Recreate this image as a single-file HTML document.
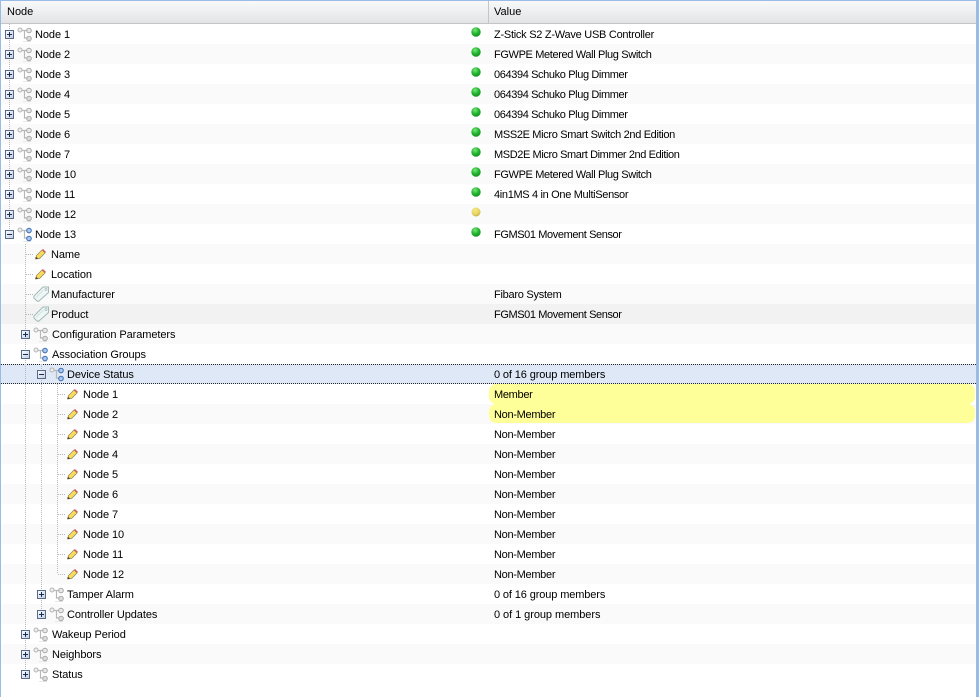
<!DOCTYPE html>
<html><head><meta charset="utf-8"><style>
html,body{margin:0;padding:0;background:#fff}
#w{position:relative;width:979px;height:697px;overflow:hidden;background:#fff;font:11px/22px "Liberation Sans",sans-serif;color:#000}
#tb{position:absolute;left:0;top:0;width:979px;height:1px;background:#99bbe8}
#lb{position:absolute;left:0;top:0;width:1px;height:697px;background:#99bbe8}
#rb{position:absolute;left:976px;top:0;width:3px;height:697px;background:#99bbe8}
#h{position:absolute;left:1px;top:1px;width:975px;height:22px;background:linear-gradient(#f9f9f9,#e3e4e6);border-bottom:1px solid #c5c5c5;line-height:22px}
#h i{position:absolute;left:487px;top:0;width:1px;height:22px;background:#c5c5c5}
#h span{position:absolute;top:0}
.r{position:absolute;left:1px;width:975px;height:20px}
.a{background:#fafafa}
.p{background:#f2f2f2}
.s{background:#dfe8f6;border-top:1px dotted #222;border-bottom:1px dotted #222;height:18px}
.t{position:absolute;white-space:nowrap;letter-spacing:-.08px}
.t[style*="left:494px"]{letter-spacing:-.3px}
.y{position:absolute;left:489px;width:486px;height:20px;background:#ffff99;border-radius:7px}
.d{position:absolute;width:1px;background-image:linear-gradient(#b8b8b8 50%,transparent 50%);background-size:1px 2px}
.hl{position:absolute;height:1px;background-image:linear-gradient(90deg,#b8b8b8 50%,transparent 50%);background-size:2px 1px}
svg{position:absolute;overflow:visible}
.dot{left:470px;width:12px;height:12px}
</style></head><body><div id="w">
<svg width="0" height="0" style="position:absolute"><defs>
<linearGradient id="bx" x1="0" y1="0" x2="1" y2="1"><stop offset="0" stop-color="#fff"/><stop offset="1" stop-color="#bccde4"/></linearGradient>
<radialGradient id="gr" cx=".4" cy=".3" r=".8"><stop offset="0" stop-color="#7be87b"/><stop offset=".5" stop-color="#22b530"/><stop offset="1" stop-color="#128a20"/></radialGradient>
<radialGradient id="ye" cx=".4" cy=".3" r=".8"><stop offset="0" stop-color="#f5e98a"/><stop offset=".6" stop-color="#e6d160"/><stop offset="1" stop-color="#b9a342"/></radialGradient>
<g id="plus"><rect x=".5" y=".5" width="8" height="8" fill="url(#bx)" stroke="#5a6a86"/><path d="M2 4.500h5M4.500 2v5" stroke="#1c2c50" fill="none"/></g>
<g id="minus"><rect x=".5" y=".5" width="8" height="8" fill="url(#bx)" stroke="#5a6a86"/><path d="M2 4.500h5" stroke="#1c2c50" fill="none"/></g>
<g id="ng"><path d="M5 3.500H7.500V11H10M7.500 3.500H10" stroke="#b8b8b8" stroke-width="1.200" fill="none"/><path d="M6 14.500h8" stroke="#e8e8e8" fill="none"/><circle cx="3" cy="3" r="2" fill="#f0f0f0" stroke="#b4b4b4"/><circle cx="12" cy="3.500" r="2.300" fill="#e8e8e8" stroke="#aaa"/><circle cx="12" cy="11.500" r="2.300" fill="#dcdcdc" stroke="#aaa"/></g>
<g id="nb"><path d="M5 3.500H7.500V11H10M7.500 3.500H10" stroke="#b8b8b8" stroke-width="1.200" fill="none"/><path d="M6 14.500h8" stroke="#e8e8e8" fill="none"/><circle cx="3" cy="3" r="2" fill="#f0f0f0" stroke="#b4b4b4"/><circle cx="12" cy="3.500" r="2.300" fill="#a9c8ee" stroke="#3d6fb8"/><circle cx="12" cy="11.500" r="2.300" fill="#a9c8ee" stroke="#3d6fb8"/></g>
<g id="pen"><path d="M.5 10L1.500 6.500 7 1 10 4 4.500 9.500z" fill="#f8dc62" stroke="#8f8048" stroke-width=".7"/><path d="M7.200 .8L8 0 11 3 10.200 3.800z" fill="#e0505c"/><path d="M.5 10L1 7.800 3 9.500z" fill="#333"/></g>
<g id="tag"><path d="M1 10L10 1H15.500V6.500L6 15Q5 15.500 4 15L1 12Q.5 11 1 10z" fill="#eef6f6" stroke="#a3b8b8"/><path d="M3 11.500L10.500 4" stroke="#d5e2e2" fill="none"/><circle cx="13" cy="3.500" r="1" fill="#fff" stroke="#a3b8b8" stroke-width=".8"/></g>
<g id="gd"><circle cx="6" cy="6" r="4.700" fill="url(#gr)"/></g>
<g id="yd"><circle cx="6" cy="6" r="4.500" fill="url(#ye)"/></g>
</defs></svg>
<div id="tb"></div><div id="lb"></div><div id="rb"></div>
<div id="h"><span style="left:6px">Node</span><i></i><span style="left:493px">Value</span></div>

<div class="r a" style="top:44px"></div>
<div class="r a" style="top:84px"></div>
<div class="r a" style="top:124px"></div>
<div class="r a" style="top:164px"></div>
<div class="r a" style="top:204px"></div>
<div class="r a" style="top:244px"></div>
<div class="r a" style="top:284px"></div>
<div class="r p" style="top:304px"></div>
<div class="r a" style="top:324px"></div>
<div class="r a" style="top:404px"></div>
<div class="r a" style="top:444px"></div>
<div class="r a" style="top:484px"></div>
<div class="r a" style="top:524px"></div>
<div class="r a" style="top:564px"></div>
<div class="r a" style="top:604px"></div>
<div class="r a" style="top:644px"></div>
<div class="r s" style="top:364px"></div>
<div class="y" style="top:384px"></div>
<div class="y" style="top:404px;height:19px"></div>

<div class="d" style="left:9px;top:24px;height:210px"></div>
<div class="d" style="left:25px;top:244px;height:430px"></div>
<div class="d" style="left:41px;top:364px;height:250px"></div>
<div class="d" style="left:57px;top:384px;height:190px"></div>
<div class="hl" style="left:26px;top:254px;width:8px"></div>
<div class="hl" style="left:26px;top:274px;width:8px"></div>
<div class="hl" style="left:26px;top:294px;width:7px"></div>
<div class="hl" style="left:26px;top:314px;width:7px"></div>
<div class="hl" style="left:58px;top:394px;width:8px"></div>
<div class="hl" style="left:58px;top:414px;width:8px"></div>
<div class="hl" style="left:58px;top:434px;width:8px"></div>
<div class="hl" style="left:58px;top:454px;width:8px"></div>
<div class="hl" style="left:58px;top:474px;width:8px"></div>
<div class="hl" style="left:58px;top:494px;width:8px"></div>
<div class="hl" style="left:58px;top:514px;width:8px"></div>
<div class="hl" style="left:58px;top:534px;width:8px"></div>
<div class="hl" style="left:58px;top:554px;width:8px"></div>
<div class="hl" style="left:58px;top:574px;width:8px"></div>

<svg style="left:5px;top:30px" width="9" height="9"><use href="#plus"/></svg><svg style="left:17px;top:27px" width="16" height="16"><use href="#ng"/></svg><span class="t" style="left:35px;top:24px">Node 1</span><svg class="dot" style="top:26px"><use href="#gd"/></svg><span class="t" style="left:494px;top:24px;letter-spacing:-.26px">Z-Stick S2 Z-Wave USB Controller</span>
<svg style="left:5px;top:50px" width="9" height="9"><use href="#plus"/></svg><svg style="left:17px;top:47px" width="16" height="16"><use href="#ng"/></svg><span class="t" style="left:35px;top:44px">Node 2</span><svg class="dot" style="top:46px"><use href="#gd"/></svg><span class="t" style="left:494px;top:44px;letter-spacing:-.36px">FGWPE Metered Wall Plug Switch</span>
<svg style="left:5px;top:70px" width="9" height="9"><use href="#plus"/></svg><svg style="left:17px;top:67px" width="16" height="16"><use href="#ng"/></svg><span class="t" style="left:35px;top:64px">Node 3</span><svg class="dot" style="top:66px"><use href="#gd"/></svg><span class="t" style="left:494px;top:64px;letter-spacing:-.38px">064394 Schuko Plug Dimmer</span>
<svg style="left:5px;top:90px" width="9" height="9"><use href="#plus"/></svg><svg style="left:17px;top:87px" width="16" height="16"><use href="#ng"/></svg><span class="t" style="left:35px;top:84px">Node 4</span><svg class="dot" style="top:86px"><use href="#gd"/></svg><span class="t" style="left:494px;top:84px;letter-spacing:-.38px">064394 Schuko Plug Dimmer</span>
<svg style="left:5px;top:110px" width="9" height="9"><use href="#plus"/></svg><svg style="left:17px;top:107px" width="16" height="16"><use href="#ng"/></svg><span class="t" style="left:35px;top:104px">Node 5</span><svg class="dot" style="top:106px"><use href="#gd"/></svg><span class="t" style="left:494px;top:104px;letter-spacing:-.38px">064394 Schuko Plug Dimmer</span>
<svg style="left:5px;top:130px" width="9" height="9"><use href="#plus"/></svg><svg style="left:17px;top:127px" width="16" height="16"><use href="#ng"/></svg><span class="t" style="left:35px;top:124px">Node 6</span><svg class="dot" style="top:126px"><use href="#gd"/></svg><span class="t" style="left:494px;top:124px;letter-spacing:-.34px">MSS2E Micro Smart Switch 2nd Edition</span>
<svg style="left:5px;top:150px" width="9" height="9"><use href="#plus"/></svg><svg style="left:17px;top:147px" width="16" height="16"><use href="#ng"/></svg><span class="t" style="left:35px;top:144px">Node 7</span><svg class="dot" style="top:146px"><use href="#gd"/></svg><span class="t" style="left:494px;top:144px;letter-spacing:-.4px">MSD2E Micro Smart Dimmer 2nd Edition</span>
<svg style="left:5px;top:170px" width="9" height="9"><use href="#plus"/></svg><svg style="left:17px;top:167px" width="16" height="16"><use href="#ng"/></svg><span class="t" style="left:35px;top:164px">Node 10</span><svg class="dot" style="top:166px"><use href="#gd"/></svg><span class="t" style="left:494px;top:164px;letter-spacing:-.36px">FGWPE Metered Wall Plug Switch</span>
<svg style="left:5px;top:190px" width="9" height="9"><use href="#plus"/></svg><svg style="left:17px;top:187px" width="16" height="16"><use href="#ng"/></svg><span class="t" style="left:35px;top:184px">Node 11</span><svg class="dot" style="top:186px"><use href="#gd"/></svg><span class="t" style="left:494px;top:184px;letter-spacing:-.33px">4in1MS 4 in One MultiSensor</span>
<svg style="left:5px;top:210px" width="9" height="9"><use href="#plus"/></svg><svg style="left:17px;top:207px" width="16" height="16"><use href="#ng"/></svg><span class="t" style="left:35px;top:204px">Node 12</span><svg class="dot" style="top:206px"><use href="#yd"/></svg>
<svg style="left:5px;top:230px" width="9" height="9"><use href="#minus"/></svg><svg style="left:17px;top:227px" width="16" height="16"><use href="#nb"/></svg><span class="t" style="left:35px;top:224px">Node 13</span><svg class="dot" style="top:226px"><use href="#gd"/></svg><span class="t" style="left:494px;top:224px;letter-spacing:-.4px">FGMS01 Movement Sensor</span>

<svg style="left:35px;top:249px" width="11" height="11"><use href="#pen"/></svg><span class="t" style="left:51px;top:244px">Name</span>
<svg style="left:35px;top:269px" width="11" height="11"><use href="#pen"/></svg><span class="t" style="left:51px;top:264px">Location</span>
<svg style="left:33px;top:286px" width="16" height="16"><use href="#tag"/></svg><span class="t" style="left:51px;top:284px">Manufacturer</span><span class="t" style="left:494px;top:284px;letter-spacing:-.26px">Fibaro System</span>
<svg style="left:33px;top:306px" width="16" height="16"><use href="#tag"/></svg><span class="t" style="left:51px;top:304px">Product</span><span class="t" style="left:494px;top:304px;letter-spacing:-.4px">FGMS01 Movement Sensor</span>

<svg style="left:21px;top:330px" width="9" height="9"><use href="#plus"/></svg><svg style="left:33px;top:327px" width="16" height="16"><use href="#ng"/></svg><span class="t" style="left:52px;top:324px">Configuration Parameters</span>
<svg style="left:21px;top:350px" width="9" height="9"><use href="#minus"/></svg><svg style="left:33px;top:347px" width="16" height="16"><use href="#nb"/></svg><span class="t" style="left:52px;top:344px">Association Groups</span>
<svg style="left:37px;top:370px" width="9" height="9"><use href="#minus"/></svg><svg style="left:49px;top:367px" width="16" height="16"><use href="#nb"/></svg><span class="t" style="left:67px;top:364px">Device Status</span><span class="t" style="left:494px;top:364px;letter-spacing:-.12px">0 of 16 group members</span>

<svg style="left:67px;top:389px" width="11" height="11"><use href="#pen"/></svg><span class="t" style="left:83px;top:384px">Node 1</span><span class="t" style="left:494px;top:384px">Member</span>
<svg style="left:67px;top:409px" width="11" height="11"><use href="#pen"/></svg><span class="t" style="left:83px;top:404px">Node 2</span><span class="t" style="left:494px;top:404px">Non-Member</span>
<svg style="left:67px;top:429px" width="11" height="11"><use href="#pen"/></svg><span class="t" style="left:83px;top:424px">Node 3</span><span class="t" style="left:494px;top:424px">Non-Member</span>
<svg style="left:67px;top:449px" width="11" height="11"><use href="#pen"/></svg><span class="t" style="left:83px;top:444px">Node 4</span><span class="t" style="left:494px;top:444px">Non-Member</span>
<svg style="left:67px;top:469px" width="11" height="11"><use href="#pen"/></svg><span class="t" style="left:83px;top:464px">Node 5</span><span class="t" style="left:494px;top:464px">Non-Member</span>
<svg style="left:67px;top:489px" width="11" height="11"><use href="#pen"/></svg><span class="t" style="left:83px;top:484px">Node 6</span><span class="t" style="left:494px;top:484px">Non-Member</span>
<svg style="left:67px;top:509px" width="11" height="11"><use href="#pen"/></svg><span class="t" style="left:83px;top:504px">Node 7</span><span class="t" style="left:494px;top:504px">Non-Member</span>
<svg style="left:67px;top:529px" width="11" height="11"><use href="#pen"/></svg><span class="t" style="left:83px;top:524px">Node 10</span><span class="t" style="left:494px;top:524px">Non-Member</span>
<svg style="left:67px;top:549px" width="11" height="11"><use href="#pen"/></svg><span class="t" style="left:83px;top:544px">Node 11</span><span class="t" style="left:494px;top:544px">Non-Member</span>
<svg style="left:67px;top:569px" width="11" height="11"><use href="#pen"/></svg><span class="t" style="left:83px;top:564px">Node 12</span><span class="t" style="left:494px;top:564px">Non-Member</span>

<svg style="left:37px;top:590px" width="9" height="9"><use href="#plus"/></svg><svg style="left:49px;top:587px" width="16" height="16"><use href="#ng"/></svg><span class="t" style="left:67px;top:584px">Tamper Alarm</span><span class="t" style="left:494px;top:584px;letter-spacing:-.12px">0 of 16 group members</span>
<svg style="left:37px;top:610px" width="9" height="9"><use href="#plus"/></svg><svg style="left:49px;top:607px" width="16" height="16"><use href="#ng"/></svg><span class="t" style="left:67px;top:604px">Controller Updates</span><span class="t" style="left:494px;top:604px;letter-spacing:-.06px">0 of 1 group members</span>
<svg style="left:21px;top:630px" width="9" height="9"><use href="#plus"/></svg><svg style="left:33px;top:627px" width="16" height="16"><use href="#ng"/></svg><span class="t" style="left:52px;top:624px">Wakeup Period</span>
<svg style="left:21px;top:650px" width="9" height="9"><use href="#plus"/></svg><svg style="left:33px;top:647px" width="16" height="16"><use href="#ng"/></svg><span class="t" style="left:52px;top:644px">Neighbors</span>
<svg style="left:21px;top:670px" width="9" height="9"><use href="#plus"/></svg><svg style="left:33px;top:667px" width="16" height="16"><use href="#ng"/></svg><span class="t" style="left:52px;top:664px">Status</span>
</div></body></html>
